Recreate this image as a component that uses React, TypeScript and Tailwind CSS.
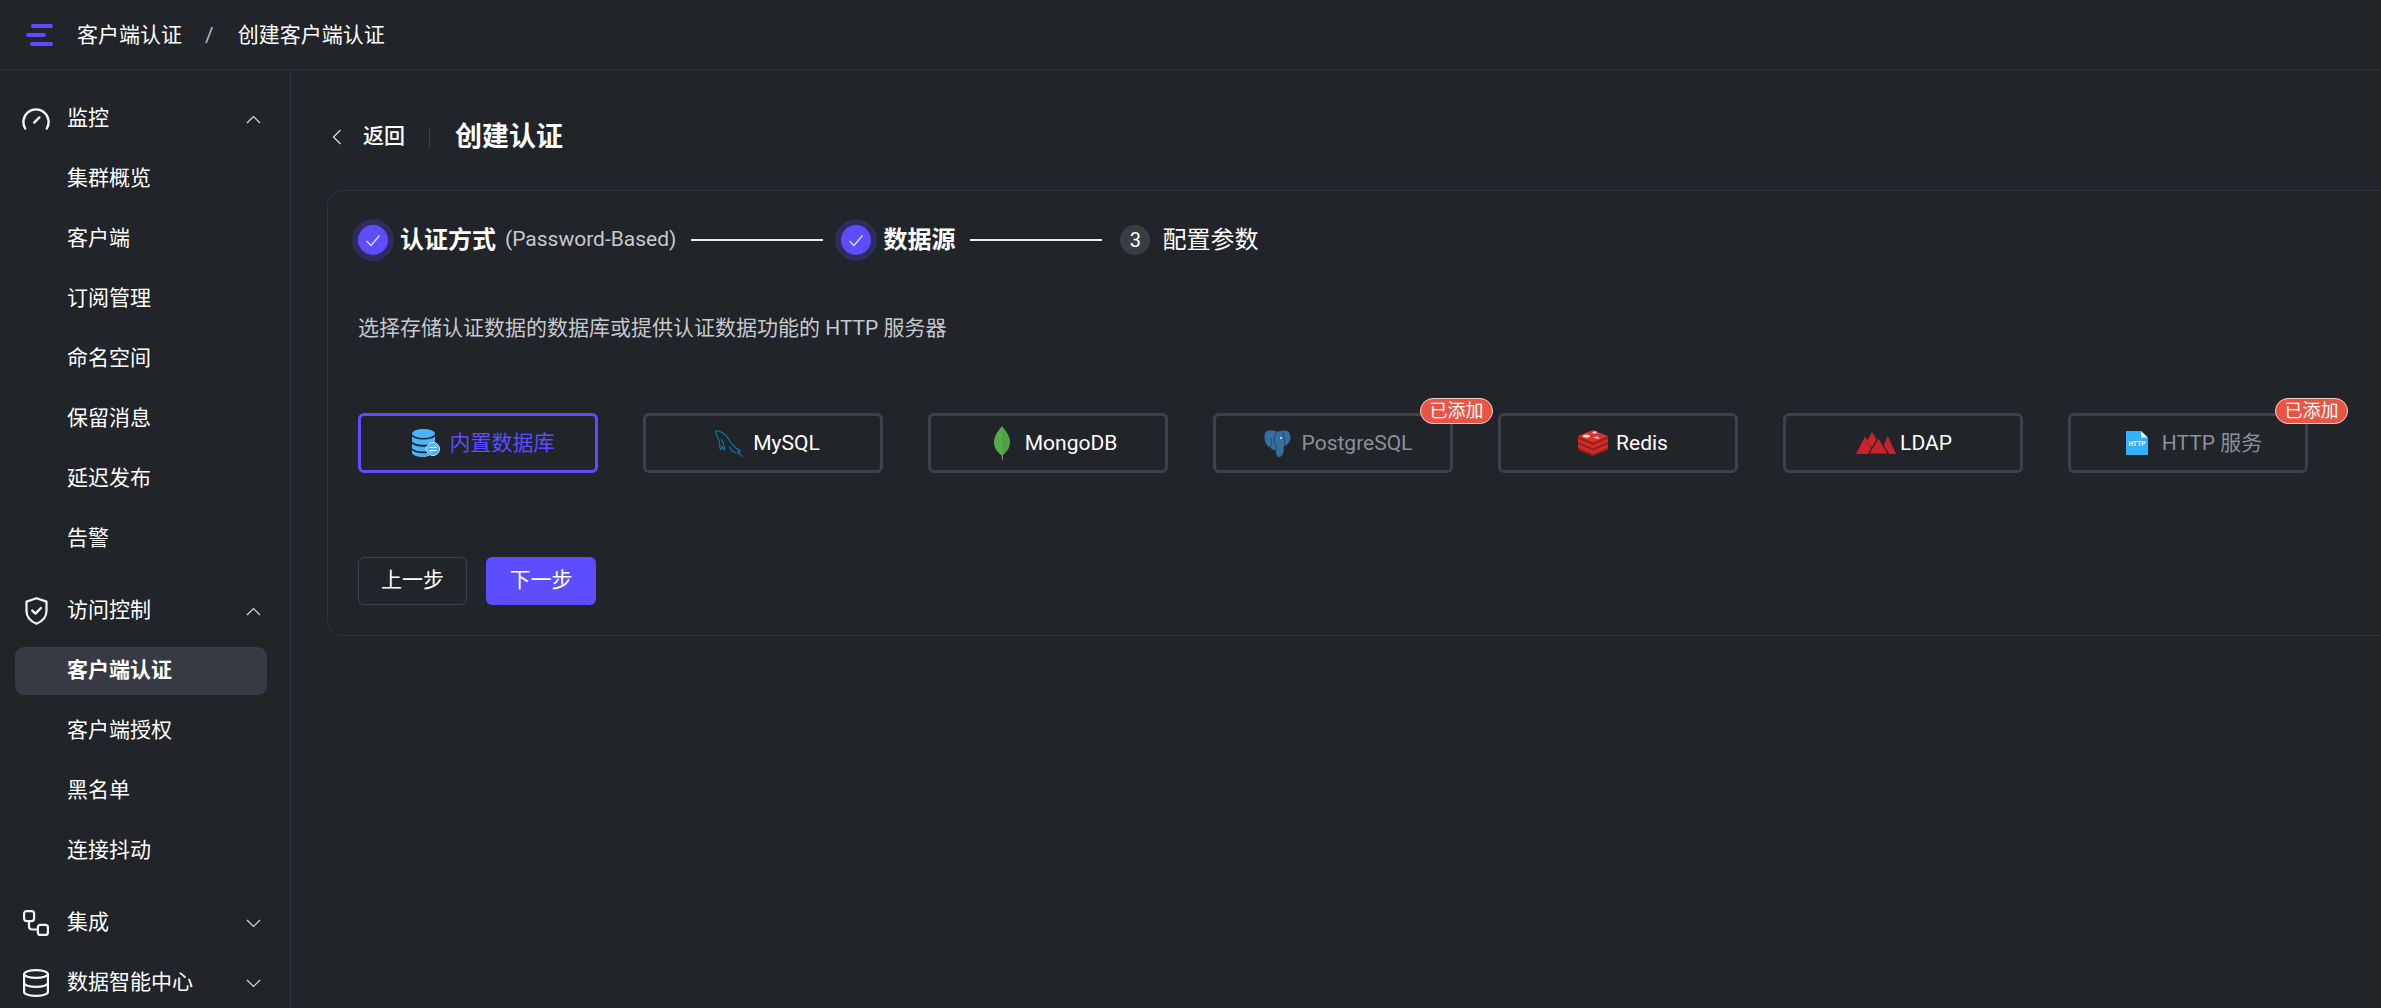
import type { ReactNode } from "react";

interface NavSection {
  label: string;
  icon: ReactNode;
  open: boolean;
  children?: string[];
  active?: string;
}

interface Source {
  name: string;
  icon: ReactNode;
  spacing: string;
  selected?: boolean;
  added?: boolean;
}

function Chevron({ up }: { up: boolean }) {
  return (
    <svg width="15" height="9" viewBox="0 0 15 9" fill="none" stroke="#d9dbde" strokeWidth="1.2">
      <polyline points={up ? "1,8 7.5,1.5 14,8" : "1,1 7.5,7.5 14,1"} />
    </svg>
  );
}

function GaugeIcon() {
  return (
    <svg width="28" height="22" viewBox="0 0 28 22" fill="none" stroke="#f2f3f4" strokeWidth="2.4" strokeLinecap="round">
      <path d="M3.200 20.500A12.600 12.600 0 1 1 24.800 20.500" />
      <path d="M12.200 14.600 17.400 9.400" />
    </svg>
  );
}

function ShieldIcon() {
  return (
    <svg width="23" height="28" viewBox="0 0 22 28" fill="none" stroke="#f2f3f4" strokeWidth="2.200" strokeLinejoin="round" strokeLinecap="round">
      <path d="M11 1.200 21 4.600V14c0 6.200-4.400 10.400-10 12.800C5.400 24.400 1 20.200 1 14V4.600Z" />
      <path d="M6.800 13.600 10 16.600 15.400 11" strokeWidth="2.400" />
    </svg>
  );
}

function IntegrationIcon() {
  return (
    <svg width="26" height="26" viewBox="0 0 26 26" fill="none" stroke="#f2f3f4" strokeWidth="2.200">
      <rect x="1.100" y="1.100" width="10" height="10" rx="2.500" />
      <rect x="14.900" y="14.900" width="10" height="10" rx="2.500" />
      <path d="M6 11v5.500a3 3 0 0 0 3 3h6" />
    </svg>
  );
}

function DatabaseIcon() {
  return (
    <svg width="26" height="28" viewBox="0 0 26 28" fill="none" stroke="#f2f3f4" strokeWidth="2.200">
      <ellipse cx="13" cy="5" rx="11.900" ry="3.900" />
      <path d="M1.100 5v18c0 2.200 5.300 3.900 11.900 3.900s11.900-1.700 11.900-3.900V5" />
      <path d="M1.100 14c0 2.200 5.300 3.900 11.900 3.900s11.900-1.700 11.900-3.900" />
    </svg>
  );
}

function BuiltinIcon() {
  return (
    <svg width="28" height="28" viewBox="0 0 28 28">
      <ellipse cx="11.500" cy="4.500" rx="11.500" ry="4.500" fill="#48b4fb" />
      <path d="M0 7.200c2 2.300 6.500 3.300 11.500 3.300S21 9.500 23 7.200v5.300c-2 2.300-6.500 3.300-11.500 3.300S2 14.800 0 12.500Z" fill="#48b4fb" />
      <path d="M0 14.500c2 2.300 6.500 3.300 11.500 3.300S21 16.800 23 14.500v4.700c-2 2.300-6.500 3.300-11.500 3.300S2 21.500 0 19.200Z" fill="#48b4fb" />
      <path d="M0 21c2 2.300 6.500 3.300 11.500 3.300h5c0 0 1 2 1.500 2.200-2 .9-4.200 1.500-6.500 1.500C5 28 0 26 0 23.500Z" fill="#48b4fb" />
      <circle cx="21" cy="20" r="6.500" fill="#48b4fb" stroke="#cfeaff" strokeWidth="1" />
      <path d="M17.500 18.500h7l-2-1.600M24.500 21.500h-7l2 1.600" fill="none" stroke="#ffffff" strokeWidth="1" />
    </svg>
  );
}

function MysqlIcon() {
  return (
    <svg width="28" height="27" viewBox="0 0 28 27" fill="none" stroke="#0b7ea8" strokeWidth="1.100" strokeLinecap="round">
      <path d="M.8.8C5 .6 10.500 3.400 13.500 9c2.200 4.200 5.500 7.800 9.500 10.300 1.400 1 2.500 1.500 2 2.200-.5.500-2-.2-2.500.2.300 1.500 2.800 2.600 4.700 4.800" />
      <path d="M.8.8C.6 5 3.500 8 4.500 12.500c.6 3-.5 5.500 1 7 1.200-.4 1.500-1.500 1.200-3 1.300 1 2 2.800 2.800 3.300.4-3.500-1-7-3-10.300" />
      <path d="M14.500 17c1.500 3 4 5.200 6.500 6.300" />
    </svg>
  );
}

function MongoIcon() {
  return (
    <svg width="16" height="34" viewBox="0 0 16 34">
      <path d="M7.700 28.500 8 34h.5l.3-5.500Z" fill="#b7ab93" />
      <path d="M8 0C3.500 5.500 0 10.500 0 16.200c0 5.700 3.500 10.500 8 13.300Z" fill="#55ad4a" />
      <path d="M8 0c4.500 5.500 8 10.500 8 16.200 0 5.700-3.500 10.500-8 13.300Z" fill="#4ca443" />
    </svg>
  );
}

function PostgresIcon() {
  return (
    <svg width="27" height="27" viewBox="0 0 27 27">
      <path
        d="M3 1C7-.5 11 .5 13 2c2.500-1.500 8-2.500 11-.5 3.500 2.500 3 8.500.5 11.500-1.500 2-3.500 3-4.500 2.500l-.5 6.500c-.5 3-2.500 5-4.500 5-2.500 0-3-3-3-6-2.500-1-5-2-6-4-3 0-6-7-5.500-11C.8 3 1.500 1.800 3 1Z"
        fill="#336f9f"
      />
      <path d="M13 2C9.500 6 9.500 11 12 15c.5 2 0 4 0 6M20 15.500c1.500-4 1-9-2-14M6 17c2-2.500 2-6 1-9" fill="none" stroke="#1f4b70" strokeWidth="1" />
      <circle cx="17" cy="8" r="1" fill="#dbe7f0" />
    </svg>
  );
}

function RedisIcon() {
  return (
    <svg width="30" height="26" viewBox="0 0 30 26">
      <path d="M0 6.500V20l15 6 15-6V6.500Z" fill="#9f1d15" />
      <path d="M0 8.500 15 15l15-6.500v3.600L15 18.600 0 12.100Z" fill="#c92f27" />
      <path d="M0 14.200 15 20.700l15-6.500v3.300L15 24 0 17.500Z" fill="#c92f27" />
      <path d="M15 0 30 6.200 15 12.600 0 6.200Z" fill="#d5352c" />
      <ellipse cx="8.500" cy="6" rx="3.500" ry="1.600" fill="#f8e4e1" />
      <path d="M15.500 1.500h3.500l-1 1 1.500 1-2.800-.2-1 1-.4-1.200-2-.6 1.800-.2Z" fill="#f9ebe9" />
      <path d="M14.500 7.500 20 6.300l1.500 2.700Z" fill="#f5d7d3" />
    </svg>
  );
}

function LdapIcon() {
  return (
    <svg width="40" height="22" viewBox="0 0 40 22" fill="#c8232b">
      <polygon points="16,0 21.500,9 16,17 10.800,9" />
      <polygon points="9.300,4 17,22 0,22" />
      <polygon points="31.700,4 40,22 24,22" />
      <polygon points="22.500,5.500 32.500,22 12.500,22" stroke="#212429" strokeWidth="1.200" />
    </svg>
  );
}

function HttpIcon() {
  return (
    <svg width="22" height="24" viewBox="0 0 22 24">
      <path d="M0 0h14.500L22 7v17H0Z" fill="#35b0fc" />
      <path d="M15 0l7 6.500h-7Z" fill="#e8f6ff" />
      <text x="11" y="15" fontSize="6.500" fontWeight="700" fill="#ffffff" textAnchor="middle" fontFamily="Roboto, sans-serif">
        HTTP
      </text>
    </svg>
  );
}

const sections: NavSection[] = [
  {
    label: "监控",
    icon: <GaugeIcon />,
    open: true,
    children: ["集群概览", "客户端", "订阅管理", "命名空间", "保留消息", "延迟发布", "告警"],
  },
  {
    label: "访问控制",
    icon: <ShieldIcon />,
    open: true,
    children: ["客户端认证", "客户端授权", "黑名单", "连接抖动"],
    active: "客户端认证",
  },
  { label: "集成", icon: <IntegrationIcon />, open: false },
  { label: "数据智能中心", icon: <DatabaseIcon />, open: false },
];

const sources: Source[] = [
  { name: "内置数据库", icon: <BuiltinIcon />, spacing: "gap-[10px] pl-[10px]", selected: true },
  { name: "MySQL", icon: <MysqlIcon />, spacing: "gap-[10px] pl-[9px]" },
  { name: "MongoDB", icon: <MongoIcon />, spacing: "gap-[15px] pl-[15px]" },
  { name: "PostgreSQL", icon: <PostgresIcon />, spacing: "gap-[11px] pl-[10px]", added: true },
  { name: "Redis", icon: <RedisIcon />, spacing: "gap-[8px] pl-[10px]" },
  { name: "LDAP", icon: <LdapIcon />, spacing: "gap-[4px] pl-[2px]" },
  { name: "HTTP 服务", icon: <HttpIcon />, spacing: "gap-[14px] pl-[12px]", added: true },
];

function StepDone({ children }: { children: ReactNode }) {
  return (
    <div className="flex items-center gap-3">
      <span className="flex h-[30px] w-[30px] items-center justify-center rounded-full bg-[#5d4dff] ring-[6px] ring-[#2f2b5c]">
        <svg width="16" height="13" viewBox="0 0 16 13" fill="none" stroke="#e6e4ff" strokeWidth="1.300">
          <polyline points="1.500,7 6,11.500 14.500,1.500" />
        </svg>
      </span>
      {children}
    </div>
  );
}

function StepLine() {
  return <div className="ml-[15px] mr-[18px] h-[2px] w-[132px] bg-[#e8ecee]" />;
}

function SourceTile({ source }: { source: Source }) {
  return (
    <div
      className={`relative flex h-[60px] w-[240px] shrink-0 items-center justify-center rounded-[6px] border-[3px] ${source.spacing} ${
        source.selected ? "border-[#5d4dff] text-[#5d4dff]" : "border-[#3e4147]"
      } ${source.added ? "text-[#8d9096]" : source.selected ? "" : "text-white"}`}
    >
      <span className="flex">{source.icon}</span>
      <span className="whitespace-nowrap text-[21px] leading-[30px]">{source.name}</span>
      {source.added && (
        <span className="absolute -right-[43px] -top-[18px] rounded-full border-[1.5px] border-[#f0d6d2] bg-[#e95444] px-[8.500px] text-[18px] leading-[24px] text-white">
          已添加
        </span>
      )}
    </div>
  );
}

export default function App() {
  return (
    <div className="flex h-screen w-full flex-col overflow-hidden bg-[#212429] font-['Roboto','Noto_Sans_CJK_SC',sans-serif] text-white">
      <header className="flex h-[70px] shrink-0 items-center border-b border-[#2f3238] pl-[26px] text-[21px] leading-[30px]">
        <div className="flex w-[27px] flex-col gap-[5px]">
          <span className="ml-[5px] h-[4px] w-[22px] rounded-full bg-[#5d4dff]" />
          <span className="h-[4px] w-[20px] rounded-full bg-[#5d4dff]" />
          <span className="ml-[4px] h-[4px] w-[23px] rounded-full bg-[#5d4dff]" />
        </div>
        <span className="ml-[24px]">客户端认证</span>
        <span className="ml-[23px] text-[#b4b7bb]">/</span>
        <span className="ml-[24px]">创建客户端认证</span>
      </header>

      <div className="flex min-h-0 flex-1">
        <aside className="w-[291px] shrink-0 overflow-hidden border-r border-[#2f3238] pt-[25px] text-[21px]">
          <nav className="ml-[15px] flex w-[252px] flex-col gap-3">
            {sections.map((section) => (
              <div key={section.label} className={`flex flex-col gap-3 ${section.open ? "mb-3" : ""}`}>
                <div className="flex h-[48px] shrink-0 items-center pl-[6px] pr-[6px]">
                  <span className="flex w-[30px] shrink-0 justify-center">{section.icon}</span>
                  <span className="ml-[16px] flex-1 whitespace-nowrap">{section.label}</span>
                  <Chevron up={section.open} />
                </div>
                {section.children?.map((child) => (
                  <div
                    key={child}
                    className={`flex h-[48px] shrink-0 items-center rounded-[9px] pl-[52px] ${
                      child === section.active ? "bg-[#373a42] font-bold" : ""
                    }`}
                  >
                    {child}
                  </div>
                ))}
              </div>
            ))}
          </nav>
        </aside>

        <main className="min-w-0 flex-1 overflow-hidden pl-[36px] pt-[46px]">
          <div className="flex h-[42px] items-center">
            <svg width="10" height="16" viewBox="0 0 10 16" fill="none" stroke="#d9dbde" strokeWidth="1.300" className="ml-[5px]">
              <polyline points="8.500,1 1.500,8 8.500,15" />
            </svg>
            <span className="ml-[21px] text-[21px] font-medium">返回</span>
            <span className="ml-[24px] h-[21px] w-px bg-[#3e4147]" />
            <span className="ml-[25px] text-[27px] font-semibold">创建认证</span>
          </div>

          <section className="mt-[32px] w-[2100px] rounded-[15px] border border-[#2f3238] pb-[30px] pl-[30px] pt-[28px]">
            <div className="flex h-[42px] items-center">
              <StepDone>
                <span className="text-[24px] font-bold">认证方式</span>
              </StepDone>
              <span className="ml-[9px] text-[21px] text-[#c6c9cc]">(Password-Based)</span>
              <StepLine />
              <StepDone>
                <span className="text-[24px] font-bold">数据源</span>
              </StepDone>
              <StepLine />
              <span className="flex h-[30px] w-[30px] items-center justify-center rounded-full bg-[#3a3d44] text-[20px]">3</span>
              <span className="ml-3 text-[24px]">配置参数</span>
            </div>

            <p className="mt-[52px] text-[21px] leading-[30px] text-[#c6c9cc]">选择存储认证数据的数据库或提供认证数据功能的 HTTP 服务器</p>

            <div className="mt-[70px] flex gap-[45px]">
              {sources.map((source) => (
                <SourceTile key={source.name} source={source} />
              ))}
            </div>

            <div className="mt-[84px] flex gap-[19px] text-[21px]">
              <button className="h-[48px] w-[109px] rounded-[6px] border border-[#3e4147]">上一步</button>
              <button className="h-[48px] w-[110px] rounded-[6px] bg-[#5d4dff]">下一步</button>
            </div>
          </section>
        </main>
      </div>
    </div>
  );
}
